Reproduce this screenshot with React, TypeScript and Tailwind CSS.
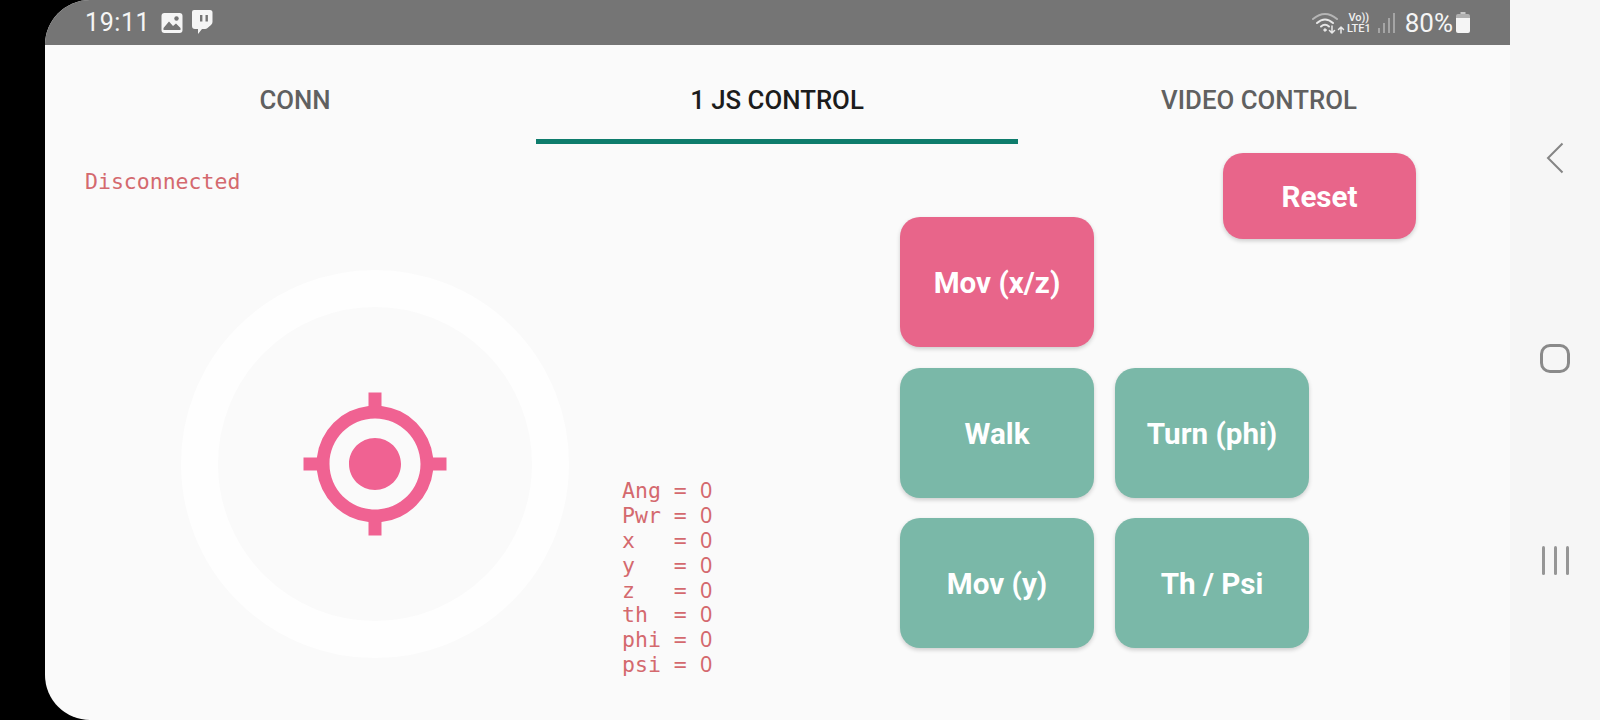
import { MdGpsFixed } from "react-icons/md";

const mono = "font-['DejaVu_Sans_Mono',monospace]";

function Btn({ label, pink, className = "" }: { label: string; pink?: boolean; className?: string }) {
  return (
    <div
      className={`flex items-center justify-center rounded-[20px] pt-[2px] text-[29.6px] font-bold text-white shadow-[0_2px_4px_rgba(0,0,0,0.18)] ${
        pink ? "bg-[#e8658a]" : "bg-[#7ab8a8]"
      } ${className}`}
    >
      {label}
    </div>
  );
}

function StatusBar() {
  return (
    <div className="flex h-[45px] items-center justify-between bg-[#757575] pl-[40px] pr-[40px] text-[#f5f5f5]">
      <div className="flex items-center">
        <span className="text-[25px] leading-none tracking-[0.6px]">19:11</span>
        <svg className="ml-[11px]" width="22" height="22" viewBox="0 0 22 22">
          <rect x="0.5" y="1" width="21" height="20" rx="3" fill="#f5f5f5" />
          <circle cx="15.5" cy="6.5" r="2.2" fill="#757575" />
          <path d="M2.5 16 L8 9.5 L12 14 L15 11.5 L19.5 16 V18 H2.5 Z" fill="#757575" />
        </svg>
        <svg className="ml-[8px] -translate-y-[1px]" width="22" height="26" viewBox="0 0 22 26">
          <path
            d="M3 1 H19 Q21.5 1 21.5 3.5 V13 Q21.5 14.5 20 16 L16.5 19 Q15.5 20 14 20 H11 L7 25 V20 H4 Q1 20 1 17 V3 Q1 1 3 1 Z"
            fill="#f5f5f5"
          />
          <rect x="9" y="6" width="2.4" height="6.5" fill="#757575" />
          <rect x="14.5" y="6" width="2.4" height="6.5" fill="#757575" />
        </svg>
      </div>
      <div className="flex items-center">
        <svg width="34" height="22" viewBox="0 0 34 22" fill="none" stroke="#e8e8e8" strokeLinecap="round">
          <path d="M1 7 Q13 -3 25 7" strokeWidth="2" stroke="#b5b5b5" />
          <path d="M5 11 Q13 4 21 11" strokeWidth="2" />
          <path d="M9 14.5 Q13 11 17 14.5" strokeWidth="2" />
          <circle cx="13" cy="18" r="1.2" fill="#e8e8e8" strokeWidth="1" />
          <path d="M20 14 V21 M17.5 18.5 L20 21 L22.5 18.5" strokeWidth="1.5" />
          <path d="M29 21 V15 M26.5 17.5 L29 15 L31.5 17.5" strokeWidth="1.5" />
        </svg>
        <div className="ml-[1px] flex flex-col items-center text-[11px] font-medium leading-[11px] text-[#f0f0f0]">
          <span>Vo))</span>
          <span>LTE1</span>
        </div>
        <div className="ml-[7px] flex h-[20px] items-end gap-[3px]">
          <div className="h-[5px] w-[2px] bg-[#a5a5a5]" />
          <div className="h-[10px] w-[2px] bg-[#a5a5a5]" />
          <div className="h-[15px] w-[2px] bg-[#a5a5a5]" />
          <div className="h-[20px] w-[2px] bg-[#a5a5a5]" />
        </div>
        <span className="ml-[10px] text-[26px] leading-none">80%</span>
        <svg className="ml-[3px]" width="14" height="21" viewBox="0 0 14 21">
          <path d="M4.5 0 H9.5 V2 H4.5 Z" fill="#c8c8c8" />
          <path d="M2 2 H12 Q14 2 14 4 V6 H0 V4 Q0 2 2 2 Z" fill="#b0b0b0" />
          <path d="M0 6 H14 V19 Q14 21 12 21 H2 Q0 21 0 19 Z" fill="#f5f5f5" />
        </svg>
      </div>
    </div>
  );
}

function Tabs() {
  const tabs = ["CONN", "1 JS CONTROL", "VIDEO CONTROL"];
  return (
    <div className="flex h-[99px] pl-[9px] pr-[10px]">
      {tabs.map((t, i) => (
        <div
          key={t}
          className={`flex w-[482px] items-center justify-center border-b-[5px] pt-[17px] text-[25.8px] font-medium ${
            i === 1 ? "border-[#0e7c6c] text-[#1c1c1c]" : "border-transparent text-[#606060]"
          }`}
        >
          {t}
        </div>
      ))}
    </div>
  );
}

function Joystick() {
  return (
    <div className="ml-[136px] mt-[75px] flex h-[388px] w-[388px] items-center justify-center rounded-full border-[37px] border-[#fefefe]">
      <MdGpsFixed size={156} color="#f06292" className="shrink-0" />
    </div>
  );
}

export default function App() {
  const stats = ["Ang = ", "Pwr = ", "x   = ", "y   = ", "z   = ", "th  = ", "phi = ", "psi = "];
  return (
    <div className="flex h-[720px] w-[1600px] overflow-hidden bg-black pl-[45px] font-['Roboto',sans-serif]">
      {/* App window */}
      <div className="flex w-[1465px] flex-col overflow-hidden rounded-l-[45px] bg-[#fafafa]">
        <StatusBar />
        <Tabs />
        <div className="flex flex-1">
          <div className="w-[577px]">
            <div className={`ml-[40px] mt-[25px] text-[21.5px] leading-[26px] text-[#d4696e] ${mono}`}>Disconnected</div>
            <Joystick />
          </div>
          <div className={`mt-[335px] w-[278px] whitespace-pre text-[21.5px] text-[#d4696e] ${mono}`}>
            {stats.map((s) => (
              <div key={s} className="h-[24.9px] leading-[24.9px]">
                {s}
                {/* plain zero, the mono font's own has a slash */}
                <span className="inline-block w-[13px] text-center font-['Noto_Sans',sans-serif] leading-none">0</span>
              </div>
            ))}
          </div>
          <div className="flex w-[516px] flex-col pt-[9px]">
            <Btn label="Reset" pink className="-mb-[22px] ml-[323px] h-[86px] w-[193px]" />
            <Btn label="Mov (x/z)" pink className="h-[130px] w-[194px]" />
            <div className="mt-[21px] grid w-[409px] grid-cols-[194px_194px] gap-x-[21px] gap-y-[20px]">
              <Btn label="Walk" className="h-[130px]" />
              <Btn label="Turn (phi)" className="h-[130px]" />
              <Btn label="Mov (y)" className="h-[130px]" />
              <Btn label="Th / Psi" className="h-[130px]" />
            </div>
          </div>
        </div>
      </div>
      {/* Android nav bar */}
      <div className="flex w-[90px] flex-col items-center bg-[#f6f6f6]">
        <svg className="mt-[142px]" width="18" height="32" viewBox="0 0 18 32" fill="none" stroke="#858585" strokeWidth="2">
          <path d="M16.5 1.5 L2 16 L16.5 30.5" />
        </svg>
        <div className="mt-[170px] h-[29px] w-[30px] rounded-[10px] border-[3px] border-[#8a8a8a]" />
        <div className="mt-[173px] flex h-[29px] gap-[9px]">
          <div className="w-[3px] rounded-full bg-[#969696]" />
          <div className="w-[3px] rounded-full bg-[#969696]" />
          <div className="w-[3px] rounded-full bg-[#969696]" />
        </div>
      </div>
    </div>
  );
}
